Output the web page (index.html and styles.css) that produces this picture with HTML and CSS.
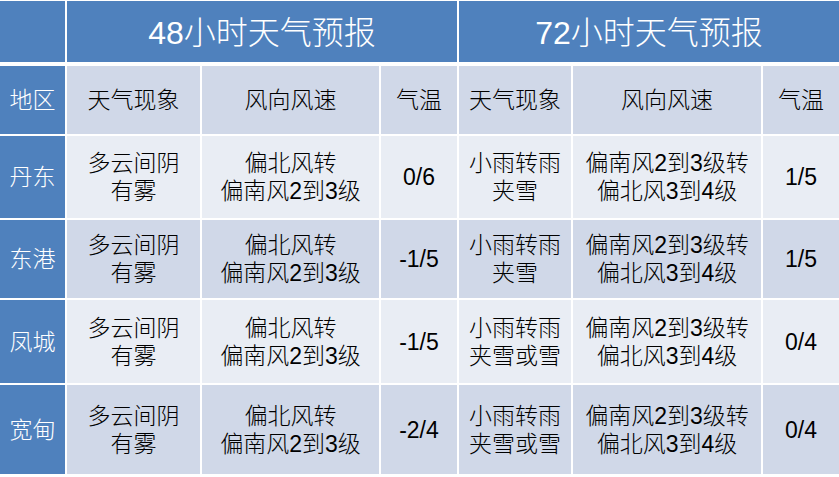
FILE: index.html
```html
<!DOCTYPE html>
<html lang="zh-CN">
<head>
<meta charset="utf-8">
<title>天气预报</title>
<link rel="stylesheet" href="styles.css">
</head>
<body>
<div class="table">
  <div class="cell corner h1"></div>
  <div class="cell title h1 span3">48小时天气预报</div>
  <div class="cell title h1 span3">72小时天气预报</div>

  <div class="cell side">地区</div>
  <div class="cell head">天气现象</div>
  <div class="cell head">风向风速</div>
  <div class="cell head">气温</div>
  <div class="cell head">天气现象</div>
  <div class="cell head">风向风速</div>
  <div class="cell head">气温</div>

  <div class="cell side">丹东</div>
  <div class="cell odd">多云间阴<br>有雾</div>
  <div class="cell odd wind">偏北风转<br>偏南风2到3级</div>
  <div class="cell odd num">0/6</div>
  <div class="cell odd">小雨转雨<br>夹雪</div>
  <div class="cell odd wind">偏南风2到3级转<br>偏北风3到4级</div>
  <div class="cell odd num">1/5</div>

  <div class="cell side">东港</div>
  <div class="cell even">多云间阴<br>有雾</div>
  <div class="cell even wind">偏北风转<br>偏南风2到3级</div>
  <div class="cell even num">-1/5</div>
  <div class="cell even">小雨转雨<br>夹雪</div>
  <div class="cell even wind">偏南风2到3级转<br>偏北风3到4级</div>
  <div class="cell even num">1/5</div>

  <div class="cell side">凤城</div>
  <div class="cell odd">多云间阴<br>有雾</div>
  <div class="cell odd wind">偏北风转<br>偏南风2到3级</div>
  <div class="cell odd num">-1/5</div>
  <div class="cell odd">小雨转雨<br>夹雪或雪</div>
  <div class="cell odd wind">偏南风2到3级转<br>偏北风3到4级</div>
  <div class="cell odd num">0/4</div>

  <div class="cell side">宽甸</div>
  <div class="cell even">多云间阴<br>有雾</div>
  <div class="cell even wind">偏北风转<br>偏南风2到3级</div>
  <div class="cell even num">-2/4</div>
  <div class="cell even">小雨转雨<br>夹雪或雪</div>
  <div class="cell even wind">偏南风2到3级转<br>偏北风3到4级</div>
  <div class="cell even num">0/4</div>
</div>
</body>
</html>
```

FILE: styles.css
```css
html, body {
  margin: 0;
  padding: 0;
  background: #ffffff;
}

.table {
  display: grid;
  grid-template-columns: 65px 133px 177px 76px 112px 188px 76px;
  grid-template-rows: 63px 68px 82px 78px 83px 89px;
  column-gap: 2px;
  row-gap: 2px;
  padding-top: 1px;
  width: 839px;
  font-family: "Liberation Sans", "Noto Sans CJK SC", sans-serif;
  font-weight: 300;
  color: #000000;
}

.cell {
  display: flex;
  align-items: center;
  justify-content: center;
  text-align: center;
  font-size: 23px;
  line-height: 28px;
}

.h1 {
  margin-bottom: 2px;
  background: #4f81bd;
}

.span3 {
  grid-column: span 3;
}

.title {
  color: #ffffff;
  font-size: 32px;
  line-height: 36px;
  padding-top: 2px;
}

.side {
  background: #4f81bd;
  color: #ffffff;
  font-size: 23px;
}

.head {
  background: #d0d8e8;
}

.odd {
  background: #e9edf4;
}

.even {
  background: #d0d8e8;
}

.num {
  font-size: 23px;
}
```
